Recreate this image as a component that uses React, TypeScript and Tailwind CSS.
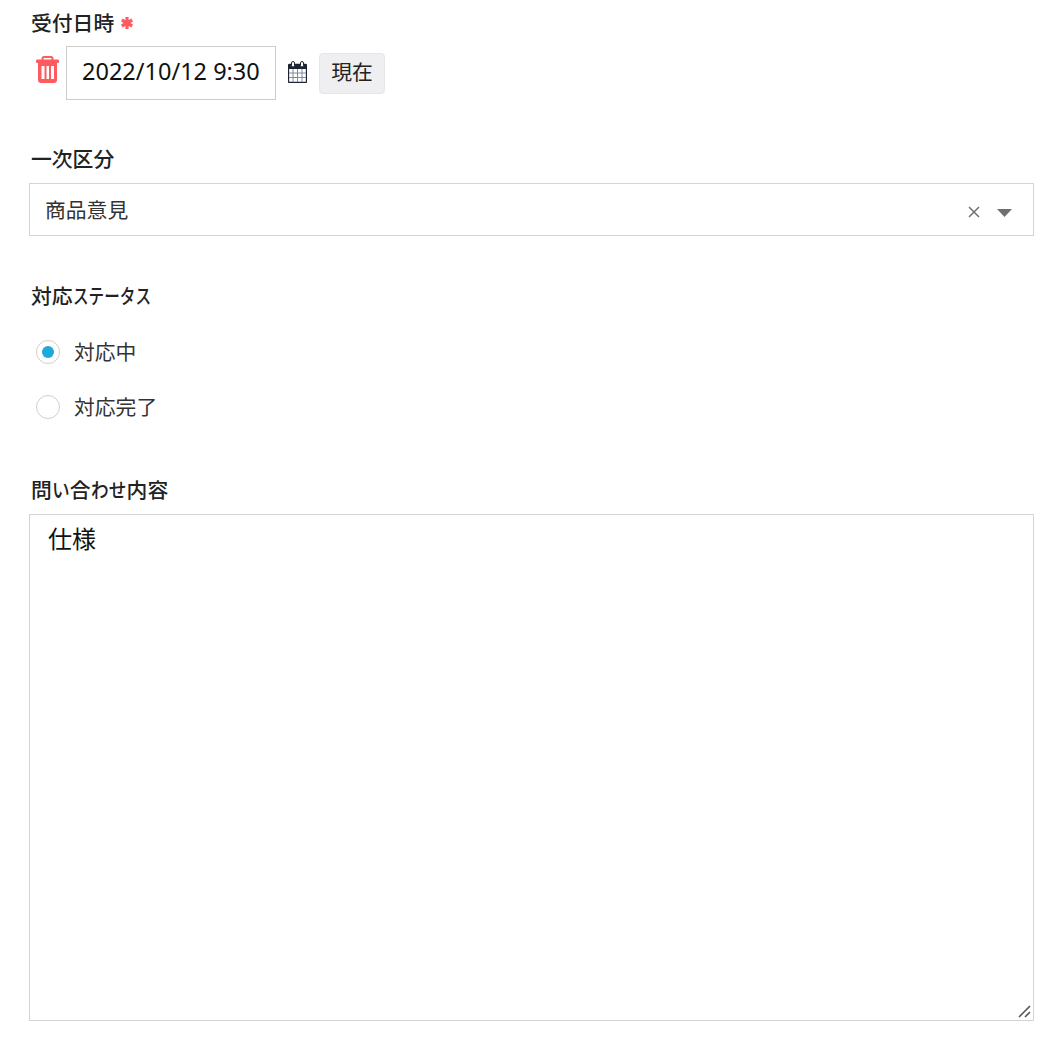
import React from "react";

function Label({ children }: { children: React.ReactNode }) {
  return <div className="h-[28px] pl-[2px] text-[20.8px] leading-[28px] font-medium text-[#222222] flex items-center">{children}</div>;
}

function Radio({ checked, label }: { checked?: boolean; label: string }) {
  return (
    <div className="flex items-center h-[55px] pl-[7px]">
      <span className="w-[24px] h-[24px] rounded-full border border-[#d0d0d0] bg-white flex items-center justify-center">
        {checked && <span className="w-[12px] h-[12px] rounded-full bg-[#1fa8dc]" />}
      </span>
      <span className="ml-[14px] text-[20.8px] text-[#333333]">{label}</span>
    </div>
  );
}

export default function App() {
  return (
    <div className="w-[1060px] h-[1042px] bg-white pl-[29px] pr-[26px] pt-[8px] font-['Noto_Sans_CJK_JP','Noto_Sans',sans-serif] overflow-hidden">
      <Label>
        受付日時
        <svg className="ml-[6px] mt-[2px]" width="14" height="14" viewBox="0 0 14 14">
          <path d="M7 1v12M1.800 4l10.400 6M1.800 10l10.400-6" stroke="#ff5a5f" strokeWidth="3.200" />
        </svg>
      </Label>
      <div className="flex items-center mt-[10px] h-[54px]">
        <svg className="ml-[7px] -mt-[7px]" width="23" height="27" viewBox="0 0 23 27">
          <path fill="none" stroke="#ff5a5f" strokeWidth="2" d="M6.500 4V2.500C6.500 1.600 7.200 1 8 1h7c.8 0 1.500.6 1.500 1.500V4" />
          <rect x="0" y="3.500" width="23" height="3.500" rx="1" fill="#ff5a5f" />
          <path fill="#ff5a5f" fillRule="evenodd" d="M2 7h19v17c0 1.700-1.300 3-3 3H5c-1.700 0-3-1.300-3-3zM5.500 10v13h3V10zm5 0v13h2.500V10zm4.500 0v13h3V10z" />
        </svg>
        <input
          readOnly
          value="2022/10/12 9:30"
          className="ml-[7px] w-[210px] h-[54px] border border-[#cccccc] pl-[15px] pr-[2px] pb-[5px] text-[23.5px] text-[#111111] font-['Noto_Sans','Noto_Sans_CJK_JP',sans-serif] outline-none bg-white"
        />
        <svg className="ml-[12px] -mt-[2px]" width="19" height="22" viewBox="0 0 19 22">
          <rect x="0.500" y="3.500" width="18" height="18" rx="1" fill="#fff" stroke="#1d2433" strokeWidth="1.300" />
          <rect x="0.500" y="3.500" width="18" height="4.500" fill="#1d2433" />
          <path d="M5 8v13M9.500 8v13M14 8v13M1 12h17M1 16.500h17" stroke="#7f8aa3" strokeWidth="1" />
          <rect x="3.500" y="0.500" width="3" height="5.500" rx="1.500" fill="#fff" stroke="#1d2433" />
          <rect x="12.500" y="0.500" width="3" height="5.500" rx="1.500" fill="#fff" stroke="#1d2433" />
        </svg>
        <button className="ml-[12px] w-[66px] h-[41px] pb-[2px] rounded-[4px] bg-[#efeff1] border border-[#e6e6e8] text-[20.8px] text-[#222222] flex items-center justify-center">
          現在
        </button>
      </div>

      <div className="mt-[44px]">
        <Label>一次区分</Label>
      </div>
      <div className="mt-[11px] h-[53px] border border-[#d4d4d4] flex items-center pl-[16px] pr-[21px] text-[20.8px] text-[#333333]">
        <span className="flex-1 -ml-[1px]">商品意見</span>
        <svg className="mt-[5px]" width="12" height="12" viewBox="0 0 12 12">
          <path d="M1 1l10 10M11 1L1 11" stroke="#707070" strokeWidth="1.500" />
        </svg>
        <svg className="ml-[17px] mt-[7px]" width="15" height="8" viewBox="0 0 15 8">
          <path d="M0 0h15L7.500 8z" fill="#6f6f6f" />
        </svg>
      </div>

      <div className="mt-[45px]">
        <Label>
          対応
          <span className="w-[78px]">
            <span className="inline-block origin-left scale-x-[0.75] whitespace-nowrap">ステータス</span>
          </span>
        </Label>
      </div>
      <div className="mt-[15px]">
        <Radio checked label="対応中" />
        <Radio label="対応完了" />
      </div>

      <div className="mt-[41px]">
        <Label>
          問
          <span className="w-[18px]">
            <span className="inline-block origin-left scale-x-[0.85] whitespace-nowrap">い</span>
          </span>
          合
          <span className="w-[36px]">
            <span className="inline-block origin-left scale-x-[0.85] whitespace-nowrap">わせ</span>
          </span>
          内容
        </Label>
      </div>
      <div className="relative mt-[11px] w-[1005px] h-[507px]">
        <textarea
          readOnly
          defaultValue="仕様"
          className="block w-full h-full border border-[#d4d4d4] px-[18px] py-[5px] text-[24px] leading-[36px] text-[#111111] outline-none bg-white resize-none"
        />
        <svg className="absolute right-[3px] bottom-[3px]" width="13" height="13" viewBox="0 0 13 13">
          <path d="M1 12L12 1M7 12l5-5" stroke="#555555" strokeWidth="1.600" />
        </svg>
      </div>
    </div>
  );
}
